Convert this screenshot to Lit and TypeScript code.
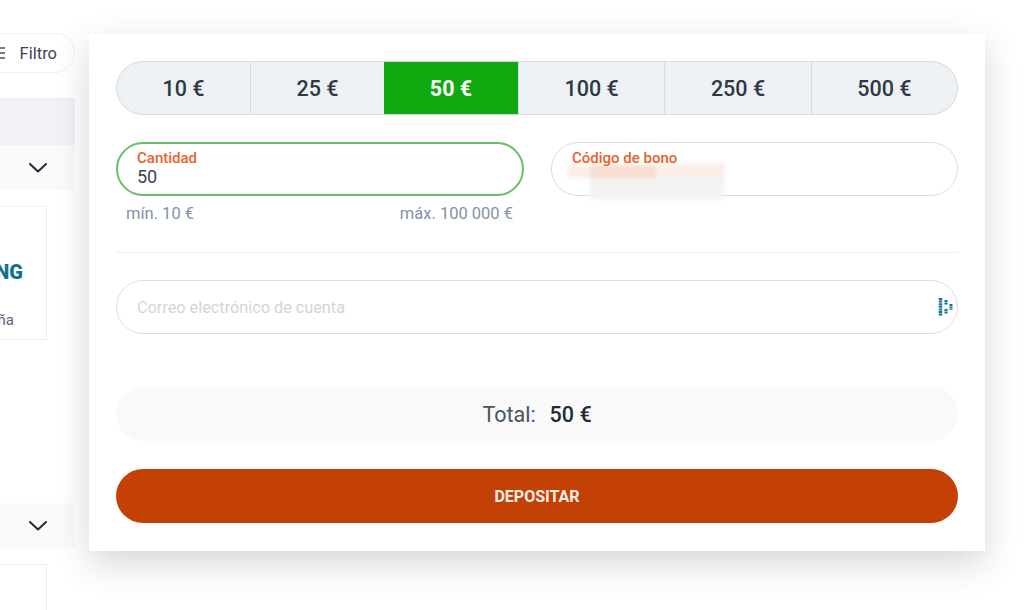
import { LitElement, html, css } from "lit";
import { customElement } from "lit/decorators.js";

const AMOUNTS = ["10 €", "25 €", "50 €", "100 €", "250 €", "500 €"];

@customElement("app-root")
export class AppRoot extends LitElement {
  static styles = css`
    :host {
      display: block;
      width: 1024px;
      height: 610px;
      overflow: hidden;
      background: #fff;
      font-family: Roboto, "Liberation Sans", sans-serif;
      color: #2b3442;
    }
    .page {
      display: flex;
      align-items: flex-start;
      gap: 14px;
      height: 610px;
    }
    .side {
      width: 75px;
      flex: none;
      height: 610px;
      overflow: hidden;
      padding-top: 33px;
      box-sizing: border-box;
    }
    .filter {
      height: 40px;
      box-sizing: border-box;
      margin-left: -30px;
      border: 1px solid #eceff3;
      border-radius: 20px;
      display: flex;
      align-items: center;
      justify-content: flex-end;
      gap: 14px;
      padding-right: 17px;
      font-size: 16.5px;
      color: #3c4654;
    }
    .filter svg {
      display: block;
    }
    .band {
      height: 47px;
      margin-top: 25px;
      background: #f0f2f5;
    }
    .acc {
      height: 45px;
      background: #fafafb;
      display: flex;
      align-items: center;
      justify-content: flex-end;
      padding-right: 28px;
    }
    .card {
      width: 47px;
      box-sizing: border-box;
      border: 1px solid #eceef1;
      border-left: none;
      margin-top: 16px;
      overflow: hidden;
      position: relative;
    }
    .card.first {
      height: 134px;
      margin-bottom: 163px;
    }
    .card.second {
      height: 60px;
    }
    .brand {
      position: absolute;
      right: 23px;
      top: 53px;
      font-size: 20px;
      font-weight: 900;
      color: #14708c;
      white-space: nowrap;
    }
    .sub {
      position: absolute;
      right: 32px;
      top: 104px;
      font-size: 15px;
      color: #5d6673;
    }
    .modal {
      position: relative;
      width: 896px;
      height: 517px;
      margin-top: 34px;
      box-sizing: border-box;
      padding: 27px;
      background: #fff;
      box-shadow: 0 12px 32px rgba(40, 50, 70, 0.2);
      display: flex;
      flex-direction: column;
    }
    .amounts {
      display: grid;
      grid-template-columns: 133px 134px 134px repeat(3, 1fr);
      height: 54px;
      box-sizing: border-box;
      border: 1px solid #d6dae1;
      border-radius: 27px;
      background: #eef1f4;
      overflow: hidden;
      font-size: 21.5px;
      font-weight: 500;
    }
    .amount {
      display: flex;
      align-items: center;
      justify-content: center;
      border-left: 1px solid #d6dae1;
      color: #2f3845;
    }
    .amount:first-child {
      border-left: none;
    }
    .amount.active {
      background: #0fa80f;
      color: #fff;
      font-weight: 700;
      border-left: none;
    }
    .fields {
      display: grid;
      grid-template-columns: 408px 407px;
      gap: 27px;
      margin-top: 27px;
    }
    .input {
      height: 54px;
      box-sizing: border-box;
      border: 1px solid #d9dde3;
      border-radius: 27px;
      padding: 8px 20px 0;
      position: relative;
    }
    .input.ok {
      border: 2px solid #6cbc6c;
      padding: 7px 19px 0;
    }
    .label {
      position: relative;
      z-index: 1;
      font-size: 15px;
      line-height: 15px;
      font-weight: 500;
      color: #e8622c;
    }
    .value {
      font-size: 18px;
      line-height: 22px;
      color: #3a4350;
    }
    .hints {
      display: flex;
      justify-content: space-between;
      padding: 8px 11px 0 10px;
      font-size: 16.5px;
      line-height: 19px;
      color: #8492a6;
    }
    .redact {
      position: absolute;
      left: 38px;
      top: 22px;
      width: 134px;
      height: 34px;
      background: #f3f3f4;
      filter: blur(2px);
    }
    .redact-strip {
      position: absolute;
      left: 16px;
      top: 21px;
      width: 156px;
      height: 14px;
      background: #fbeee8;
      filter: blur(2px);
    }
    .redact-mark {
      position: absolute;
      left: 38px;
      top: 23px;
      width: 66px;
      height: 12px;
      background: #f8dfd3;
      filter: blur(1px);
    }
    .rule {
      height: 1px;
      background: #f0f1f3;
      margin-top: 29px;
    }
    .email {
      margin-top: 27px;
      height: 54px;
      box-sizing: border-box;
      border: 1px solid #d9dde3;
      border-radius: 27px;
      padding: 0 3px 0 20px;
      display: flex;
      align-items: center;
      justify-content: space-between;
      font-size: 16.25px;
      color: #d0d5dc;
    }
    .total {
      margin-top: 53px;
      height: 54px;
      border-radius: 27px;
      background: #f9f9fa;
      display: flex;
      align-items: center;
      justify-content: center;
      gap: 14px;
      font-size: 21.5px;
      color: #4a5361;
    }
    .total b {
      font-weight: 500;
      color: #222b38;
    }
    .pay {
      margin-top: 28px;
      height: 54px;
      border-radius: 27px;
      background: #c44105;
      display: flex;
      align-items: center;
      justify-content: center;
      font-size: 16px;
      font-weight: 700;
      color: #fbeee8;
    }
  `;

  private chevron() {
    return html`<svg width="18" height="10" viewBox="0 0 18 10" fill="none">
      <path d="M1 1l8 7.5L17 1" stroke="#222b38" stroke-width="2" stroke-linecap="round" stroke-linejoin="round" />
    </svg>`;
  }

  render() {
    return html`
      <div class="page">
        <aside class="side">
          <div class="filter">
            <svg width="6" height="14" viewBox="0 0 6 14" fill="none">
              <path d="M0 2h5M0 7h5M0 12h5" stroke="#4a5361" stroke-width="1.5" />
            </svg>
            <span>Filtro</span>
          </div>
          <div class="band"></div>
          <div class="acc">${this.chevron()}</div>
          <div class="card first">
            <span class="brand">NG</span>
            <span class="sub">ña</span>
          </div>
          <div class="acc">${this.chevron()}</div>
          <div class="card second"></div>
        </aside>
        <section class="modal">
          <div class="amounts">
            ${AMOUNTS.map(
              (a) => html`<div class="amount ${a === "50 €" ? "active" : ""}">${a}</div>`
            )}
          </div>
          <div class="fields">
            <div>
              <div class="input ok">
                <div class="label">Cantidad</div>
                <div class="value">50</div>
              </div>
              <div class="hints"><span>mín. 10 €</span><span>máx. 100 000 €</span></div>
            </div>
            <div class="input">
              <div class="label">Código de bono</div>
              <div class="redact"></div>
              <div class="redact-strip"></div>
              <div class="redact-mark"></div>
            </div>
          </div>
          <div class="rule"></div>
          <div class="email">
            <span>Correo electrónico de cuenta</span>
            <svg width="16" height="20" viewBox="0 0 16 20" fill="none">
              <path d="M2.5 1v18" stroke="#14708c" stroke-width="3.5" stroke-dasharray="2 .6" />
              <path d="M8 3v5M8 12v5" stroke="#14708c" stroke-width="3" stroke-dasharray="2 .6" />
              <path d="M13 7v6" stroke="#14708c" stroke-width="3" stroke-dasharray="2 .6" />
            </svg>
          </div>
          <div class="total"><span>Total:</span><b>50 €</b></div>
          <div class="pay">DEPOSITAR</div>
        </section>
      </div>
    `;
  }
}
